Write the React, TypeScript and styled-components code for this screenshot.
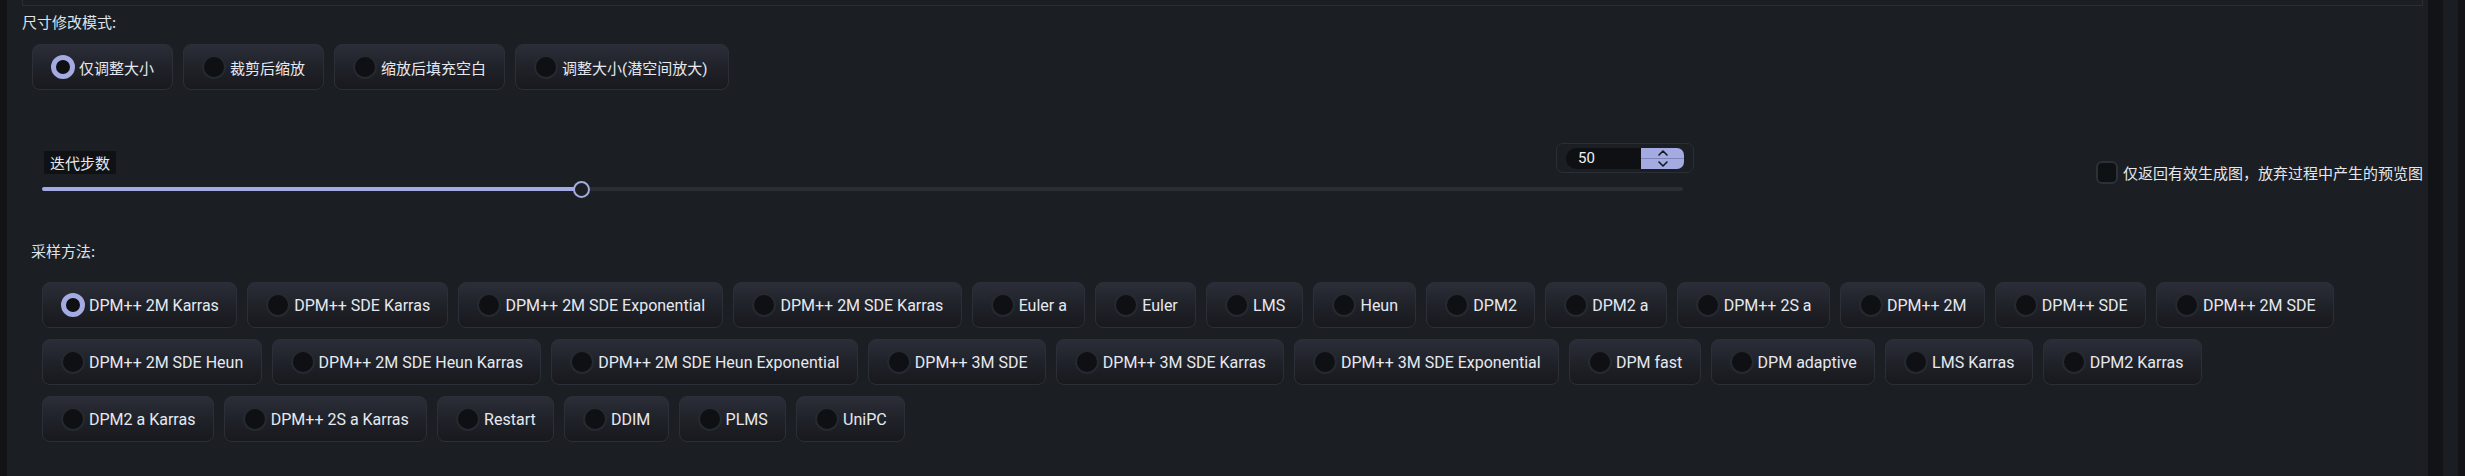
import React from "react";
import styled, { createGlobalStyle } from "styled-components";

const GlobalStyle = createGlobalStyle`
  html, body { margin: 0; padding: 0; background: #1b1e22; }
  * { box-sizing: border-box; }
`;

const FONT = `Roboto, "Noto Sans CJK SC", sans-serif`;
const CJK = `"Noto Sans CJK SC", "Noto Sans", sans-serif`;
const ACCENT = "#a4aae2";

const Page = styled.div`
  width: 2465px;
  height: 476px;
  display: flex;
  overflow: hidden;
  background: #1b1e22;
  color: #e4e7ee;
  font-family: ${FONT};
`;

const Strip = styled.div<{ $w: number; $c: string }>`
  width: ${(p) => p.$w}px;
  flex: 0 0 ${(p) => p.$w}px;
  background: ${(p) => p.$c};
`;

const Main = styled.div`
  flex: 1;
  padding: 0 5px 0 15px;
  display: flex;
  flex-direction: column;
`;

const TopEdge = styled.div`
  height: 6px;
  border: 1px solid #2a2e34;
  border-top: none;
`;

const SectionLabel = styled.div<{ $mt: number; $ml: number }>`
  margin-top: ${(p) => p.$mt}px;
  margin-left: ${(p) => p.$ml}px;
  font-family: ${CJK};
  font-size: 15px;
  line-height: 20px;
  height: 20px;
  color: #dfe2e9;
`;

const RadioRow = styled.div<{ $mt: number; $ml: number }>`
  display: flex;
  gap: 10px;
  margin-top: ${(p) => p.$mt}px;
  margin-left: ${(p) => p.$ml}px;
`;

const RadioColumn = styled.div`
  display: flex;
  flex-direction: column;
  gap: 11px;
  margin-top: 21px;
  margin-left: 20px;
`;

const RadioButton = styled.label<{ $size: number; $pr: number }>`
  display: flex;
  align-items: center;
  gap: 4px;
  height: 46px;
  padding: 0 ${(p) => p.$pr}px 0 18px;
  border: 1px solid #2b2f37;
  border-radius: 8px;
  background: linear-gradient(180deg, #2b2e38 0%, #1f2128 55%, #17191d 100%);
  font-size: ${(p) => p.$size}px;
  color: #e6e9f0;
  white-space: nowrap;
`;

const Dot = styled.span<{ $on?: boolean }>`
  width: 24px;
  height: 24px;
  flex: 0 0 24px;
  border-radius: 50%;
  background: #0e1013;
  border: ${(p) => (p.$on ? `5px solid ${ACCENT}` : "2px solid #252a31")};
`;

const SliderRow = styled.div`
  display: flex;
  margin-top: 53px;
  padding-left: 20px;
`;

const SliderBlock = styled.div`
  width: 1652px;
  display: flex;
  flex-direction: column;
`;

const SliderHeader = styled.div`
  display: flex;
  justify-content: space-between;
  align-items: flex-start;
  height: 30px;
`;

const SliderLabel = styled.span`
  margin-top: 8px;
  margin-left: 2px;
  height: 23px;
  padding: 0 6px;
  background: #0f1114;
  font-family: ${CJK};
  font-size: 15px;
  line-height: 23px;
  color: #e4e7ee;
`;

const NumberBox = styled.div`
  width: 138px;
  height: 30px;
  padding: 4px 9px 3px 9px;
  border: 1px solid #2a2e35;
  border-radius: 7px;
  display: flex;
`;

const NumberField = styled.div`
  flex: 1;
  background: #0e1013;
  border-radius: 11px 0 0 11px;
  font-size: 15px;
  line-height: 21px;
  padding-left: 12px;
  color: #eef0f5;
`;

const Spinner = styled.div`
  width: 43px;
  background: ${ACCENT};
  border-radius: 0 7px 7px 0;
  display: flex;
  flex-direction: column;
`;

const SpinHalf = styled.div<{ $top?: boolean }>`
  flex: 1;
  display: flex;
  align-items: center;
  justify-content: center;
  border-bottom: ${(p) => (p.$top ? "1px solid #7e84b8" : "none")};
`;

const Track = styled.div`
  position: relative;
  margin-top: 14px;
  margin-right: 11px;
  height: 4px;
  border-radius: 2px;
  background: #2a2f35;
`;

const Fill = styled.div`
  height: 100%;
  background: ${ACCENT};
  border-radius: 2px;
`;

const Thumb = styled.div`
  position: absolute;
  top: 50%;
  width: 17px;
  height: 17px;
  margin: -8.5px 0 0 -8.5px;
  border-radius: 50%;
  border: 2px solid ${ACCENT};
  background: #1b1e22;
`;

const CheckWrap = styled.label`
  margin-left: auto;
  margin-top: 18px;
  height: 23px;
  display: flex;
  align-items: center;
  gap: 5px;
  font-family: ${CJK};
  font-size: 15px;
  color: #e4e7ee;
`;

const CheckBox = styled.span`
  width: 22px;
  height: 23px;
  border-radius: 6px;
  border: 2px solid #2c3138;
  background: #0f1215;
`;

const resizeModes = ["仅调整大小", "裁剪后缩放", "缩放后填充空白", "调整大小(潜空间放大)"];

const samplerRows = [
  [
    "DPM++ 2M Karras",
    "DPM++ SDE Karras",
    "DPM++ 2M SDE Exponential",
    "DPM++ 2M SDE Karras",
    "Euler a",
    "Euler",
    "LMS",
    "Heun",
    "DPM2",
    "DPM2 a",
    "DPM++ 2S a",
    "DPM++ 2M",
    "DPM++ SDE",
    "DPM++ 2M SDE",
  ],
  [
    "DPM++ 2M SDE Heun",
    "DPM++ 2M SDE Heun Karras",
    "DPM++ 2M SDE Heun Exponential",
    "DPM++ 3M SDE",
    "DPM++ 3M SDE Karras",
    "DPM++ 3M SDE Exponential",
    "DPM fast",
    "DPM adaptive",
    "LMS Karras",
    "DPM2 Karras",
  ],
  ["DPM2 a Karras", "DPM++ 2S a Karras", "Restart", "DDIM", "PLMS", "UniPC"],
];

const Chevron = ({ up }: { up?: boolean }) => (
  <svg width="10" height="6" viewBox="0 0 10 6">
    <path
      d={up ? "M1 5 L5 1 L9 5" : "M1 1 L5 5 L9 1"}
      fill="none"
      stroke="#15171b"
      strokeWidth="1.6"
      strokeLinecap="round"
      strokeLinejoin="round"
    />
  </svg>
);

export default function App() {
  const value = 50;
  const pct = ((value - 1) / (150 - 1)) * 100;
  return (
    <>
      <GlobalStyle />
      <Page>
        <Strip $w={7} $c="#111316" />
        <Main>
          <TopEdge />
          <SectionLabel $mt={6} $ml={0}>尺寸修改模式:</SectionLabel>
          <RadioRow $mt={12} $ml={10}>
            {resizeModes.map((m, i) => (
              <RadioButton key={m} $size={15} $pr={i === 3 ? 21 : 18}>
                <Dot $on={i === 0} />
                {m}
              </RadioButton>
            ))}
          </RadioRow>

          <SliderRow>
            <SliderBlock>
              <SliderHeader>
                <SliderLabel>迭代步数</SliderLabel>
                <NumberBox>
                  <NumberField>{value}</NumberField>
                  <Spinner>
                    <SpinHalf $top>
                      <Chevron up />
                    </SpinHalf>
                    <SpinHalf>
                      <Chevron />
                    </SpinHalf>
                  </Spinner>
                </NumberBox>
              </SliderHeader>
              <Track>
                <Fill style={{ width: `${pct}%` }} />
                <Thumb style={{ left: `${pct}%` }} />
              </Track>
            </SliderBlock>
            <CheckWrap>
              <CheckBox />
              仅返回有效生成图，放弃过程中产生的预览图
            </CheckWrap>
          </SliderRow>

          <SectionLabel $mt={50} $ml={9}>采样方法:</SectionLabel>
          <RadioColumn>
            {samplerRows.map((row, r) => (
              <RadioRow key={r} $mt={0} $ml={0}>
                {row.map((s) => (
                  <RadioButton key={s} $size={16} $pr={17.3}>
                    <Dot $on={s === "DPM++ 2M Karras"} />
                    {s}
                  </RadioButton>
                ))}
              </RadioRow>
            ))}
          </RadioColumn>
        </Main>
        <Strip $w={15} $c="#111316" />
        <Strip $w={15} $c="#1a1d21" />
        <Strip $w={7} $c="#111316" />
      </Page>
    </>
  );
}
